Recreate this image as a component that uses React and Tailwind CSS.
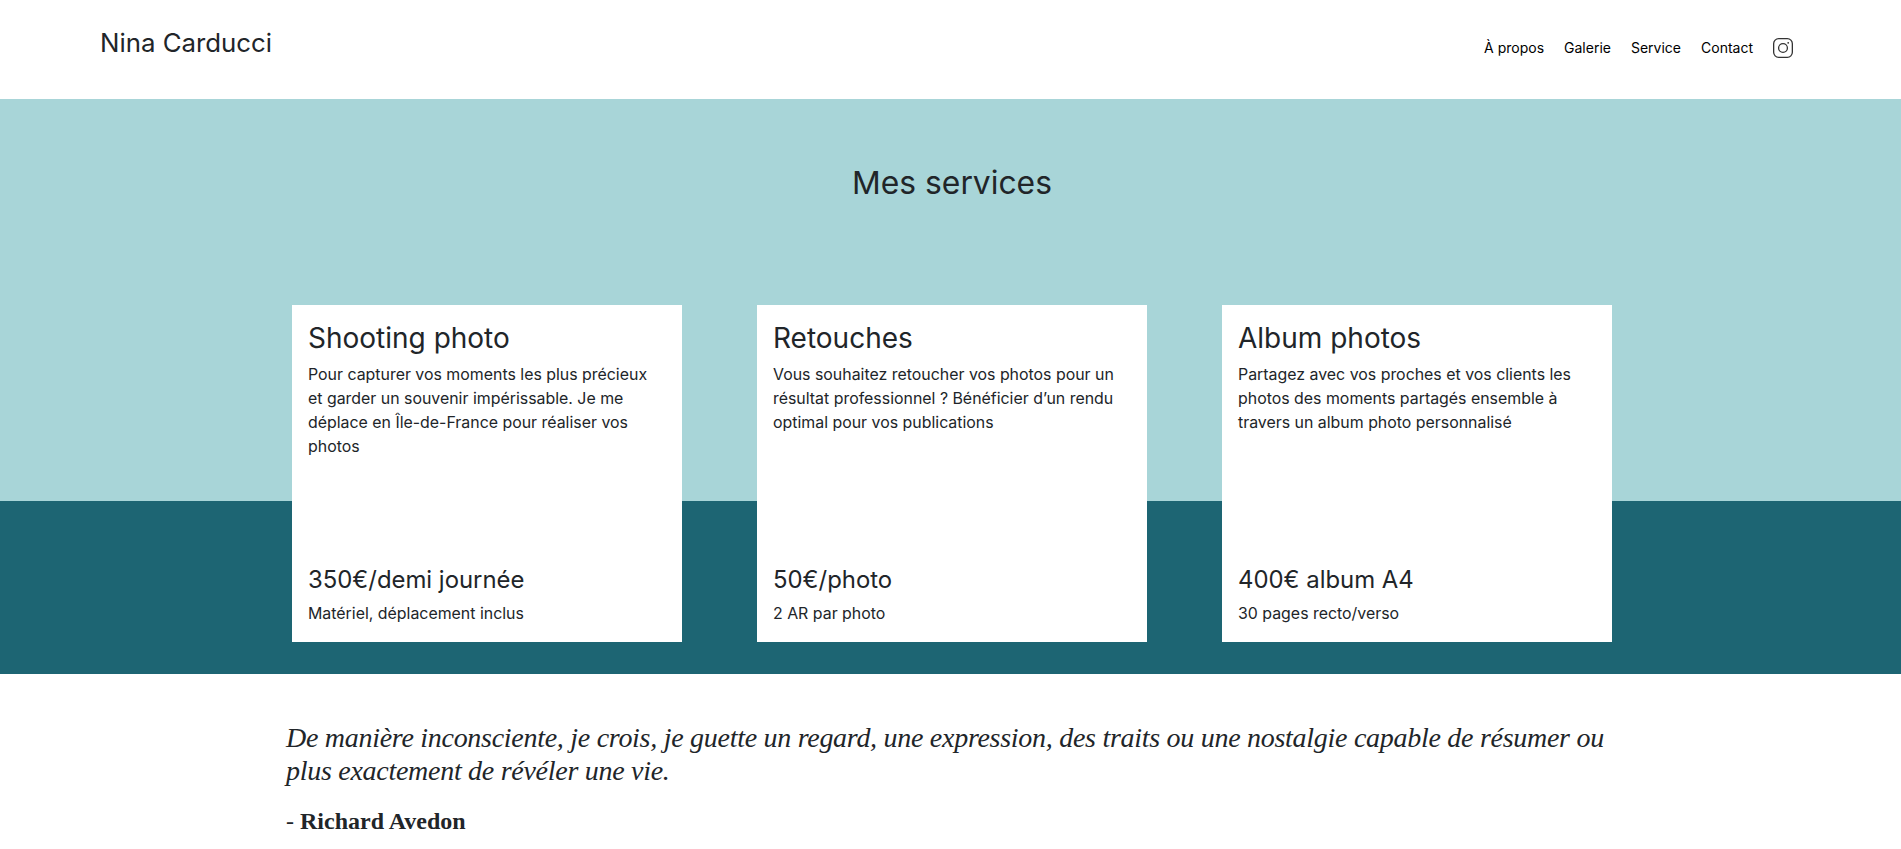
const services = [
  {
    title: 'Shooting photo',
    text: 'Pour capturer vos moments les plus précieux et garder un souvenir impérissable. Je me déplace en Île-de-France pour réaliser vos photos',
    price: '350€/demi journée',
    note: 'Matériel, déplacement inclus',
  },
  {
    title: 'Retouches',
    text: 'Vous souhaitez retoucher vos photos pour un résultat professionnel ? Bénéficier d’un rendu optimal pour vos publications',
    price: '50€/photo',
    note: '2 AR par photo',
  },
  {
    title: 'Album photos',
    text: 'Partagez avec vos proches et vos clients les photos des moments partagés ensemble à travers un album photo personnalisé',
    price: '400€ album A4',
    note: '30 pages recto/verso',
  },
];

const links = ['À propos', 'Galerie', 'Service', 'Contact'];

const InstagramIcon = () => (
  <svg width="20" height="20" viewBox="0 0 20 20" fill="none" stroke="#333" strokeWidth="1.3">
    <rect x="0.65" y="0.65" width="18.7" height="18.7" rx="5" />
    <circle cx="10" cy="10" r="4.4" />
    <circle cx="15.2" cy="4.8" r="0.9" fill="#333" stroke="none" />
  </svg>
);

const App = () => {
  return (
    <div className="font-['Inter',sans-serif] text-[#212529] bg-white">
      {/* Header */}
      <header className="h-[99px] pl-[100px] pr-[108px] flex justify-between">
        <h1 className="text-[25.8px] leading-[32px] pt-[27px]">Nina Carducci</h1>
        <nav className="flex items-center gap-[20px] pb-[4px] text-[14px] text-black">
          {links.map((link) => (
            <a key={link}>{link}</a>
          ))}
          <InstagramIcon />
        </nav>
      </header>

      {/* Services */}
      <section className="h-[575px] pt-[64px] pl-[3px] bg-[linear-gradient(#a8d5d8_70%,#1d6573_70%)]">
        <h2 className="text-[31.8px] leading-[40px] text-center">Mes services</h2>
        <div className="flex justify-center gap-[75px] mt-[102px]">
          {services.map((service) => (
            <article key={service.title} className="w-[390px] h-[337px] bg-white p-[16px] flex flex-col">
              <h3 className="text-[28px] leading-[34px]">{service.title}</h3>
              <p className="text-[15.9px] leading-[24px] mt-[8px] pr-[8px]">{service.text}</p>
              <div className="mt-auto">
                <p className="text-[23.9px] leading-[29px]">{service.price}</p>
                <p className="text-[15.9px] leading-[24px] mt-[8px]">{service.note}</p>
              </div>
            </article>
          ))}
        </div>
      </section>

      {/* Quote */}
      <section className="pl-[286px] w-[1620px] pt-[47px] font-['Liberation_Serif',serif]">
        <p className="italic text-[28px] leading-[33px] tracking-[-0.28px]">
          De manière inconsciente, je crois, je guette un regard, une expression, des traits ou une nostalgie capable de résumer ou plus exactement de révéler une vie.
        </p>
        <p className="text-[24px] leading-[30px] mt-[19px]">
          - <strong className="font-bold">Richard Avedon</strong>
        </p>
      </section>
    </div>
  );
};

export default App;
